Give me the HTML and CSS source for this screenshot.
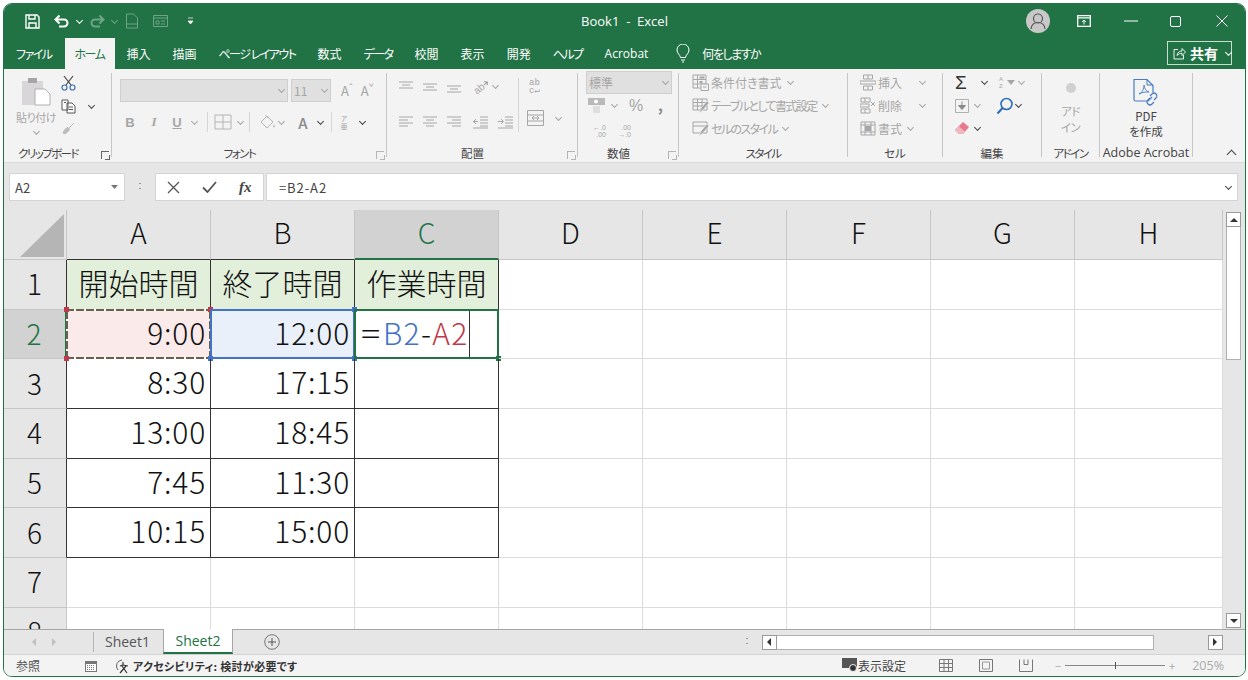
FILE: index.html
```html
<!DOCTYPE html>
<html lang="ja">
<head>
    <meta charset="UTF-8">
    <title>Book1 - Excel</title>
    <link rel="stylesheet" href="styles.css">
</head>
<body>
<svg class="sprite" aria-hidden="true">
    <symbol id="i-left" viewBox="0 0 14 14"><path d="M0 2h14M3 5h8M0 8h14" fill="none" stroke="currentColor"/></symbol>
    <symbol id="i-mid" viewBox="0 0 14 14"><path d="M0 4h14M3 7h8M0 10h14" fill="none" stroke="currentColor"/></symbol>
    <symbol id="i-bot" viewBox="0 0 14 14"><path d="M0 6h14M3 9h8M0 12h14" fill="none" stroke="currentColor"/></symbol>
    <symbol id="i-alignl" viewBox="0 0 14 14"><path d="M0 2h14M0 5h9M0 8h14M0 11h9" fill="none" stroke="currentColor"/></symbol>
    <symbol id="i-alignc" viewBox="0 0 14 14"><path d="M0 2h14M3 5h8M0 8h14M3 11h8" fill="none" stroke="currentColor"/></symbol>
    <symbol id="i-alignr" viewBox="0 0 14 14"><path d="M0 2h14M5 5h9M0 8h14M5 11h9" fill="none" stroke="currentColor"/></symbol>
</svg>

<div class="window">
    <!-- タイトルバー -->
    <header class="titlebar">
        <div class="qat">
            <svg width="15" height="15" viewBox="0 0 15 15"><path d="M1 1h11l2 2v11H1zM4 1v4h6V1M4 14V9h7v5" fill="none" stroke="#fff" stroke-width="1.4"/></svg>
            <svg class="qat-undo" width="16" height="14" viewBox="0 0 16 14"><path d="M2.5 5.5H11a3.500 3.500 0 0 1 0 7H6M6.500 1.500l-4 4 4 4" fill="none" stroke="#fff" stroke-width="2"/></svg>
            <i class="chev white ml8"></i>
            <svg class="ml8 dim" width="16" height="14" viewBox="0 0 16 14"><path d="M13.500 5.500H5a3.500 3.500 0 0 0 0 7h5M9.500 1.500l4 4-4 4" fill="none" stroke="#fff" stroke-width="2"/></svg>
            <i class="chev white dim ml6"></i>
            <svg class="ml8 dim" width="14" height="16" viewBox="0 0 14 16"><path d="M1.500 1h7l4 4v10h-11zM1.500 11h11" fill="none" stroke="#fff"/></svg>
            <svg class="ml14 dim" width="15" height="14" viewBox="0 0 15 14"><path d="M.5 1.500h14v11H.5zM.5 4h14M3 7h3v3H3zM8 7h4M8 10h4" fill="none" stroke="#fff"/></svg>
            <svg class="ml-extra" width="7" height="8" viewBox="0 0 7 8"><path d="M1 1h5M1 4h5l-2.500 3z" fill="#fff" stroke="#fff" stroke-width=".7"/></svg>
        </div>
        <div class="doc-title">Book1&nbsp; - &nbsp;Excel</div>
        <div class="win-btns">
            <span class="avatar">
                <svg width="24" height="24" viewBox="0 0 24 24"><circle cx="12" cy="9.500" r="4.500" fill="none" stroke="#555" stroke-width="1.200"/><path d="M5 20c.5-4.500 3.500-6.500 7-6.500s6.500 2 7 6.500" fill="none" stroke="#555" stroke-width="1.200"/></svg>
            </span>
            <svg class="btn-ribbon" width="14" height="12" viewBox="0 0 14 12"><path d="M.7.700h12.600v10.600H.7zM.7 2.800h12.600" fill="none" stroke="#fff" stroke-width="1.300"/><path d="M7 9.500V5M5 7l2-2 2 2" fill="none" stroke="#fff"/></svg>
            <svg class="btn-min" width="14" height="2" viewBox="0 0 14 2"><path d="M0 1h14" stroke="#fff"/></svg>
            <svg class="btn-max" width="11" height="11" viewBox="0 0 11 11"><rect x=".5" y=".5" width="10" height="10" rx="1.500" fill="none" stroke="#fff"/></svg>
            <svg class="btn-close" width="12" height="12" viewBox="0 0 12 12"><path d="M.5.500l11 11M11.500.500l-11 11" stroke="#fff"/></svg>
        </div>
    </header>

    <!-- タブ -->
    <nav class="tabs">
        <span class="tab kana">ファイル</span>
        <span class="tab kana active">ホーム</span>
        <span class="tab">挿入</span>
        <span class="tab">描画</span>
        <span class="tab kana">ページ レイアウト</span>
        <span class="tab">数式</span>
        <span class="tab kana">データ</span>
        <span class="tab">校閲</span>
        <span class="tab">表示</span>
        <span class="tab">開発</span>
        <span class="tab kana">ヘルプ</span>
        <span class="tab latin">Acrobat</span>
        <span class="tell">
            <svg width="14" height="19" viewBox="0 0 14 19"><path d="M4.500 13.500C4 10.500 1 9.500 1 6a6 6 0 0 1 12 0c0 3.500-3 4.500-3.500 7.500zM5 16h4M6 18h2" fill="none" stroke="#fff"/></svg>
            <span class="kana">何をしますか</span>
        </span>
        <span class="share">
            <svg width="13" height="13" viewBox="0 0 13 13"><path d="M5 2.500H1v9.500h9.500V8M4 8.500c.3-3 2.500-4.500 5-4.500V1.500l3.500 3.500L9 8.500V6.300C7 6.300 5.300 7 4 8.500z" fill="none" stroke="#fff" stroke-width=".9"/></svg>
            <b>共有</b>
            <i class="chev white"></i>
        </span>
    </nav>

    <!-- リボン -->
    <section class="ribbon">
        <div class="group g-clip has-launcher">
            <div class="group-body clip">
                <div class="paste">
                    <svg width="29" height="29" viewBox="0 0 29 29"><path d="M0 4h21v24H0z" fill="#d9d6d9"/><path d="M6 1h9v5H6z" fill="#a8a5a8"/><path d="M13 12h10l5 5v11H13z" fill="#fff" stroke="#b0b0b0"/></svg>
                    <span class="kana-soft">貼り付け</span>
                    <i class="chev"></i>
                </div>
                <div class="clip-tools">
                    <svg width="15" height="16" viewBox="0 0 15 16"><path d="M3 1l7 9M12 1L5 10" fill="none" stroke="#444" stroke-width="1.200"/><circle cx="3.500" cy="12.500" r="2.500" fill="none" stroke="#3f6fb0" stroke-width="1.200"/><circle cx="11.500" cy="12.500" r="2.500" fill="none" stroke="#3f6fb0" stroke-width="1.200"/></svg>
                    <div class="row">
                        <svg width="16" height="15" viewBox="0 0 16 15"><path d="M1 1h6v10H1zM6 4h5l3 3v7H6z" fill="#fff" stroke="#555"/><path d="M8 8h4M8 10.500h4M3 3.500h2" stroke="#555"/></svg>
                        <i class="chev dark ml12"></i>
                    </div>
                    <svg width="14" height="13" viewBox="0 0 14 13"><path d="M13 1L8 6M2 11c1-3 3-5 5-5.500l1.500 1.500C8 9 6 11 3 12z" fill="#bbb" stroke="#bbb"/></svg>
                </div>
            </div>
            <div class="group-label tight">クリップボード</div>
            <i class="launcher dark-launch"></i>
        </div>

        <div class="group g-font has-launcher">
            <div class="group-body font">
                <div class="row font-top">
                    <div class="combo combo-name"><i class="chev"></i></div>
                    <div class="combo combo-size"><span>11</span><i class="chev"></i></div>
                    <span class="grow-a ml10">A<sup>ˆ</sup></span>
                    <span class="grow-a ml8">A<sup>ˇ</sup></span>
                </div>
                <div class="row font-bottom">
                    <b class="fb ml4">B</b>
                    <i class="fi ml12">I</i>
                    <u class="fu ml10">U</u>
                    <i class="chev ml8"></i>
                    <span class="vsep ml10"></span>
                    <svg class="ml6" width="18" height="16" viewBox="0 0 18 16"><path d="M1 1h16v14H1zM9 1v14M1 8h16" fill="none" stroke="#b5b5b5"/></svg>
                    <i class="chev ml6"></i>
                    <span class="vsep ml6"></span>
                    <svg class="ml10" width="16" height="16" viewBox="0 0 16 16"><path d="M1 8l6-6 6 6-6 6zM5 1l3 3" fill="none" stroke="#b5b5b5"/><path d="M14 10c1 2 1 3.500 0 3.500s-1-1.500 0-3.500" fill="#b5b5b5"/></svg>
                    <i class="chev ml3"></i>
                    <span class="fa ml12">A</span>
                    <i class="chev dark ml8"></i>
                    <span class="vsep ml8"></span>
                    <span class="fz ml6">ア<br>亜</span>
                    <i class="chev dark ml10"></i>
                </div>
            </div>
            <div class="group-label kana">フォント</div>
            <i class="launcher"></i>
        </div>

        <div class="group g-align has-launcher">
            <div class="group-body align">
                <div class="align-main">
                    <div class="row align-top">
                        <svg width="14" height="14"><use href="#i-left"/></svg>
                        <svg class="ml10" width="14" height="14"><use href="#i-mid"/></svg>
                        <svg class="ml10" width="14" height="14"><use href="#i-bot"/></svg>
                        <span class="orient ml12">ab<svg width="8" height="8" viewBox="0 0 8 8"><path d="M0 4h7M4 1l3 3-3 3" fill="none" stroke="#777"/></svg></span>
                        <i class="chev ml3"></i>
                    </div>
                    <div class="row align-bottom">
                        <svg width="14" height="14"><use href="#i-alignl"/></svg>
                        <svg class="ml10" width="14" height="14"><use href="#i-alignc"/></svg>
                        <svg class="ml10" width="14" height="14"><use href="#i-alignr"/></svg>
                        <svg class="ml12" width="15" height="14" viewBox="0 0 15 14"><path d="M7 2h8M7 5h8M7 8h8M7 11h8M0 13h15M5 6.500H0M3 4L.5 6.500 3 9" fill="none" stroke="#a6a6a6"/></svg>
                        <svg class="ml10" width="15" height="14" viewBox="0 0 15 14"><path d="M7 2h8M7 5h8M7 8h8M7 11h8M0 13h15M0 6.500h5M3 4l2.500 2.500L3 9" fill="none" stroke="#a6a6a6"/></svg>
                    </div>
                </div>
                <div class="align-side">
                    <span class="wrap-ic">ab<br>c↵</span>
                    <div class="row merge">
                        <svg width="17" height="16" viewBox="0 0 17 16"><path d="M.5.500h16v15H.5zM.5 5h16M.5 11h16M5 8h7M10 6l2 2-2 2M7 6L5 8l2 2" fill="none" stroke="#a6a6a6"/></svg>
                        <i class="chev ml12"></i>
                    </div>
                </div>
            </div>
            <div class="group-label">配置</div>
            <i class="launcher"></i>
        </div>

        <div class="group g-number has-launcher">
            <div class="group-body number">
                <div class="combo combo-format"><span>標準</span><i class="chev"></i></div>
                <div class="row num-mid">
                    <svg width="18" height="17" viewBox="0 0 18 17"><path d="M0 1h17v7H0z" fill="#b9b9b9"/><path d="M5 9h7v7H5z" fill="#dedede"/><circle cx="8" cy="4.500" r="2" fill="#fff"/></svg>
                    <i class="chev ml6"></i>
                    <span class="pct ml12">%</span>
                    <b class="comma ml12">,</b>
                </div>
                <div class="row num-low">
                    <span class="dec">←.0<br>.00</span>
                    <span class="dec ml10">.00<br>→.0</span>
                </div>
            </div>
            <div class="group-label">数値</div>
            <i class="launcher"></i>
        </div>

        <div class="group g-style">
            <div class="group-body lines">
                <div class="row line">
                    <svg width="17" height="17" viewBox="0 0 17 17"><path d="M1 1h13v13H1zM1 5.500h13M1 10h13M5.500 1v13" fill="none" stroke="#a6a6a6"/><path d="M7.500 2.500h5v2h-5zM7.500 7h3v2h-3z" fill="#a6a6a6"/><path d="M9 10h7.500v6.500H9z" fill="#f3f3f3" stroke="#a6a6a6"/><path d="M11 13h3.500" stroke="#a6a6a6"/></svg>
                    <span>条件付き書式</span>
                    <i class="chev ml4"></i>
                </div>
                <div class="row line">
                    <svg width="17" height="17" viewBox="0 0 17 17"><path d="M1 2h14v11H1zM1 5.500h14M1 9h14M5.500 2v11M10 2v11" fill="none" stroke="#a6a6a6"/><path d="M7 16l2-5 6-7 2 2-6 7z" fill="#a6a6a6" stroke="#f3f3f3" stroke-width=".6"/></svg>
                    <span class="tight">テーブルとして書式設定</span>
                    <i class="chev ml4"></i>
                </div>
                <div class="row line">
                    <svg width="17" height="17" viewBox="0 0 17 17"><path d="M1 2h14v11H1zM1 6h14" fill="none" stroke="#a6a6a6"/><path d="M7 16l2-5 6-7 2 2-6 7z" fill="#a6a6a6" stroke="#f3f3f3" stroke-width=".6"/></svg>
                    <span class="tight">セルのスタイル</span>
                    <i class="chev ml4"></i>
                </div>
            </div>
            <div class="group-label tight">スタイル</div>
        </div>

        <div class="group g-cell">
            <div class="group-body lines">
                <div class="row line">
                    <svg width="16" height="17" viewBox="0 0 16 17"><path d="M3.500 1h9v4h-9zM3.500 12h9v4h-9zM8 1v4M8 12v4M0 7h16v3H0z" fill="none" stroke="#a6a6a6"/></svg>
                    <span>挿入</span>
                    <i class="chev ml16"></i>
                </div>
                <div class="row line">
                    <svg width="16" height="17" viewBox="0 0 16 17"><path d="M1 1h9v4H1zM1 12h9v4H1zM5 1v4M5 12v4M0 7h9v3H0zM11 5l4 4M15 5l-4 4" fill="none" stroke="#a6a6a6"/></svg>
                    <span>削除</span>
                    <i class="chev ml16"></i>
                </div>
                <div class="row line">
                    <svg width="16" height="17" viewBox="0 0 16 17"><path d="M1 2h14v13H1zM1 5h14M1 12h14M5 2v13M11 2v13" fill="none" stroke="#a6a6a6"/><path d="M5 6h6v5H5z" fill="#a6a6a6"/></svg>
                    <span>書式</span>
                    <i class="chev ml4"></i>
                </div>
            </div>
            <div class="group-label">セル</div>
        </div>

        <div class="group g-edit">
            <div class="group-body lines edit">
                <div class="row line">
                    <span class="sigma">Σ</span>
                    <i class="chev dark ml14"></i>
                    <span class="sort-az ml12">A<br>Z</span>
                    <svg width="8" height="8" viewBox="0 0 8 8"><path d="M0 1h8L4 6z" fill="#a6a6a6"/></svg>
                    <i class="chev ml4"></i>
                </div>
                <div class="row line">
                    <svg width="14" height="14" viewBox="0 0 14 14"><path d="M.5.500h13v13H.5z" fill="none" stroke="#b0b0b0"/><path d="M7 2.500v7M3.500 6.500L7 10.500l3.500-4z" fill="#8a8a8a" stroke="#8a8a8a"/></svg>
                    <i class="chev ml6"></i>
                    <svg class="ml16" width="18" height="18" viewBox="0 0 18 18"><circle cx="10.500" cy="7" r="5.500" fill="none" stroke="#2b6cb8" stroke-width="1.600"/><path d="M6.500 11L1.500 16.500" stroke="#2b6cb8" stroke-width="2"/></svg>
                    <i class="chev dark ml2"></i>
                </div>
                <div class="row line">
                    <svg width="14" height="13" viewBox="0 0 14 13"><path d="M8 0l6 5-6 7H4L0 8z" fill="#e8788c"/><path d="M0 8l4 4h4l2-2.500L4 4.500z" fill="#f0b7c0"/></svg>
                    <i class="chev dark ml6"></i>
                </div>
            </div>
            <div class="group-label">編集</div>
        </div>

        <div class="group g-addin">
            <div class="group-body big-btn disabled">
                <span class="addin-dot"></span>
                <span class="kana-soft">アド</span>
                <span class="kana-soft">イン</span>
            </div>
            <div class="group-label kana">アドイン</div>
        </div>

        <div class="group g-acro">
            <div class="group-body big-btn">
                <svg class="pdf-ic" width="27" height="28" viewBox="0 0 27 28"><path d="M14 23H2.500a1.500 1.500 0 0 1-1.500-1.500v-20h13l6 6v7" fill="none" stroke="#4a7bc4" stroke-width="1.200"/><path d="M14 1v6h6" fill="none" stroke="#4a7bc4"/><path d="M6 16c3-1 5-5 5-9 .5 4 2 6 5 7-3 0-7 0-10 2z" fill="none" stroke="#4a7bc4" stroke-width=".9"/><path d="M15 23l4-4M17 18l2-2a2.800 2.800 0 0 1 4 4l-2 2M21 24l-2 2a2.800 2.800 0 0 1-4-4l2-2" fill="none" stroke="#4a7bc4" stroke-width="1.200"/></svg>
                <span>PDF</span>
                <span>を作成</span>
            </div>
            <div class="group-label latin">Adobe Acrobat</div>
        </div>

        <i class="chev up dark collapse"></i>
    </section>

    <!-- 数式バー -->
    <section class="formula">
        <div class="namebox"><span>A2</span><svg width="7" height="4" viewBox="0 0 7 4"><path d="M0 0h7L3.500 4z" fill="#777"/></svg></div>
        <span class="grip"></span>
        <div class="fx-btns">
            <svg width="13" height="13" viewBox="0 0 13 13"><path d="M1 1l11 11M12 1L1 12" stroke="#555" stroke-width="1.300"/></svg>
            <svg width="15" height="12" viewBox="0 0 15 12"><path d="M1 6.500L5.500 11 14 1" fill="none" stroke="#555" stroke-width="1.800"/></svg>
            <em>fx</em>
        </div>
        <div class="fx-input"><span>=B2-A2</span><i class="chev dark"></i></div>
    </section>

    <!-- シート -->
    <section class="sheet-area">
        <div class="sheet">
            <div class="corner"><svg width="44" height="43" viewBox="0 0 44 43"><path d="M44 0v43H0z" fill="#b5b5b5"/></svg></div>
            <div class="ch mark">A</div>
            <div class="ch mark">B</div>
            <div class="ch mark on">C</div>
            <div class="ch">D</div>
            <div class="ch">E</div>
            <div class="ch">F</div>
            <div class="ch">G</div>
            <div class="ch">H</div>

            <div class="rh mark">1</div>
            <div class="c box head">開始時間</div>
            <div class="c box head">終了時間</div>
            <div class="c box head">作業時間</div>
            <div class="c"></div><div class="c"></div><div class="c"></div><div class="c"></div><div class="c"></div>

            <div class="rh mark on">2</div>
            <div class="c box num ref-a">9:00
                <span class="ants"></span>
                <i class="h red tl"></i><i class="h red tr"></i><i class="h red bl"></i><i class="h red br"></i>
            </div>
            <div class="c box num ref-b">12:00
                <span class="blue-box"></span>
                <i class="h blue tr"></i><i class="h blue bl"></i><i class="h blue br"></i>
            </div>
            <div class="c box editing">
                <span class="entry"><span class="eq">=</span><span class="t-blue">B2</span>-<span class="t-red">A2</span></span>
                <span class="active-box"></span>
                <i class="h green br"></i>
            </div>
            <div class="c"></div><div class="c"></div><div class="c"></div><div class="c"></div><div class="c"></div>

            <div class="rh mark">3</div>
            <div class="c box num">8:30</div>
            <div class="c box num">17:15</div>
            <div class="c box"></div>
            <div class="c"></div><div class="c"></div><div class="c"></div><div class="c"></div><div class="c"></div>

            <div class="rh mark">4</div>
            <div class="c box num">13:00</div>
            <div class="c box num">18:45</div>
            <div class="c box"></div>
            <div class="c"></div><div class="c"></div><div class="c"></div><div class="c"></div><div class="c"></div>

            <div class="rh mark">5</div>
            <div class="c box num">7:45</div>
            <div class="c box num">11:30</div>
            <div class="c box"></div>
            <div class="c"></div><div class="c"></div><div class="c"></div><div class="c"></div><div class="c"></div>

            <div class="rh mark">6</div>
            <div class="c box num">10:15</div>
            <div class="c box num">15:00</div>
            <div class="c box"></div>
            <div class="c"></div><div class="c"></div><div class="c"></div><div class="c"></div><div class="c"></div>

            <div class="rh">7</div>
            <div class="c"></div><div class="c"></div><div class="c"></div><div class="c"></div><div class="c"></div><div class="c"></div><div class="c"></div><div class="c"></div>

            <div class="rh">8</div>
            <div class="c"></div><div class="c"></div><div class="c"></div><div class="c"></div><div class="c"></div><div class="c"></div><div class="c"></div><div class="c"></div>
        </div>
        <div class="vscroll">
            <div class="sb-btn"><i class="tri t-up"></i></div>
            <div class="v-thumb"></div>
            <div class="sb-btn v-down"><i class="tri t-down"></i></div>
        </div>
    </section>

    <!-- シートタブ -->
    <section class="sheetbar">
        <i class="nav-tri l"></i>
        <i class="nav-tri r"></i>
        <span class="tabs-sep"></span>
        <span class="sheet-tab">Sheet1</span>
        <span class="sheet-tab current">Sheet2</span>
        <svg class="add-sheet" width="16" height="16" viewBox="0 0 16 16"><circle cx="8" cy="8" r="7.300" fill="none" stroke="#777"/><path d="M8 4v8M4 8h8" stroke="#555"/></svg>
        <span class="grip bar-grip"></span>
        <div class="hscroll">
            <div class="sb-btn"><i class="tri t-left"></i></div>
            <div class="h-thumb"></div>
            <div class="sb-btn h-right"><i class="tri t-right"></i></div>
        </div>
    </section>

    <!-- ステータスバー -->
    <footer class="status">
        <span class="st-mode">参照</span>
        <svg class="st-cal" width="12" height="13" viewBox="0 0 12 13"><path d="M0 2h12v11H0z" fill="#777"/><path d="M1 5h10v7H1z" fill="#fff"/><path d="M2 6.500h8M2 8.500h8M2 10.500h8" stroke="#777" stroke-dasharray="1 1"/></svg>
        <svg class="st-acc" width="16" height="16" viewBox="0 0 16 16"><path d="M7 2a6 6 0 0 0-4 10" fill="none" stroke="#666"/><path d="M8 4v3l-3 1M7 8l5 7M11 8l-6 7M8 7l5 1" fill="none" stroke="#333" stroke-width="1.200"/></svg>
        <b class="st-text">アクセシビリティ: 検討が必要です</b>
        <span class="st-display">
            <svg width="16" height="15" viewBox="0 0 16 15"><path d="M0 0h15v10H0z" fill="#555"/><circle cx="11" cy="10" r="3.500" fill="#333" stroke="#f3f3f3"/></svg>
            <span>表示設定</span>
        </span>
        <svg class="st-view" width="14" height="13" viewBox="0 0 14 13"><path d="M.5.500h13v12H.5zM.5 4.500h13M.5 8.500h13M5 .5v12M9.500.5v12" fill="none" stroke="#777"/></svg>
        <svg class="st-view v2" width="14" height="13" viewBox="0 0 14 13"><path d="M.5.500h13v12H.5z" fill="none" stroke="#777"/><path d="M3.500 3h7v7h-7z" fill="none" stroke="#999"/></svg>
        <svg class="st-view v2" width="14" height="13" viewBox="0 0 14 13"><path d="M.5.500v12h13V.5M5 .5v5h4v-5" fill="none" stroke="#777"/></svg>
        <span class="zoom">
            <i>−</i>
            <span class="slider"><span class="knob"></span></span>
            <i>+</i>
            <span class="zoom-val">205%</span>
        </span>
    </footer>
</div>
</body>
</html>
```
FILE: styles.css
```css
html, body{
    margin: 0;
    padding: 0;
    width: 100%;
    height: 100%;
    background-color: #fff;
}
body{
    font-family: "Noto Sans CJK JP", "Noto Sans", sans-serif;
    font-feature-settings: "palt";
    color: #444;
    overflow: hidden;
}
.sprite{
    display: none;
}
i{
    font-style: normal;
}
.window{
    display: flex;
    flex-direction: column;
    box-sizing: border-box;
    width: 1243px;
    height: 674px;
    margin: 3px 0 0 3px;
    border: 1px solid #217346;
    border-radius: 9px;
    overflow: hidden;
}
.row{
    display: flex;
    align-items: center;
}
.kana{
    letter-spacing: -1.5px;
}
.kana-soft{
    letter-spacing: -.5px;
}
.tight{
    letter-spacing: -1.6px;
}
.latin{
    font-family: "Open Sans", sans-serif;
}

/* 余白 */
.ml2{ margin-left: 2px; }
.ml3{ margin-left: 3px; }
.ml4{ margin-left: 4px; }
.ml6{ margin-left: 6px; }
.ml8{ margin-left: 8px; }
.ml10{ margin-left: 10px; }
.ml12{ margin-left: 12px; }
.ml14{ margin-left: 14px; }
.ml16{ margin-left: 16px; }
.ml-extra{ margin-left: 19px; }

/* シェブロン */
.chev{
    display: inline-block;
    flex: none;
    box-sizing: border-box;
    width: 5px;
    height: 5px;
    margin-bottom: 2px;
    border-right: 1px solid #a6a6a6;
    border-bottom: 1px solid #a6a6a6;
    transform: rotate(45deg);
}
.chev.dark{
    border-color: #444;
    border-width: 1.5px;
}
.chev.white{
    border-color: #fff;
}
.chev.up{
    transform: rotate(225deg);
    width: 7px;
    height: 7px;
    border-width: 1px;
}
.dim{
    opacity: .35;
}

/* タイトルバー */
.titlebar{
    display: grid;
    grid-template-columns: 1fr auto 1fr;
    align-items: center;
    flex: none;
    height: 34px;
    background-color: #217346;
    color: #fff;
}
.qat{
    display: flex;
    align-items: center;
    padding-left: 21px;
}
.qat-undo{
    margin-left: 13px;
}
.doc-title{
    font-family: "Open Sans", sans-serif;
    font-size: 13px;
}
.win-btns{
    display: flex;
    align-items: center;
    justify-content: flex-end;
}
.avatar{
    display: flex;
    width: 24px;
    height: 24px;
    border-radius: 50%;
    background-color: #c8c8c8;
    margin-right: 27px;
}
.btn-ribbon{ margin-right: 33px; }
.btn-min{ margin-right: 32px; }
.btn-max{ margin-right: 35px; }
.btn-close{ margin-right: 17px; }

/* タブ */
.tabs{
    display: flex;
    align-items: stretch;
    flex: none;
    height: 31px;
    padding-left: 1px;
    background-color: #217346;
    color: #fff;
    font-size: 12px;
    line-height: 31px;
}
.tab{
    padding: 0 11px;
    white-space: pre;
}
.tab.active{
    margin-left: 2px;
    padding: 0 11px 0 10px;
    background-color: #f3f3f3;
    color: #217346;
}
.tell{
    display: flex;
    align-items: center;
    gap: 12px;
    margin-left: 17px;
}
.share{
    display: flex;
    align-items: center;
    gap: 4px;
    box-sizing: border-box;
    width: 65px;
    height: 24px;
    margin: 3px 13px 0 auto;
    padding-left: 5px;
    border: 1px solid #c9ddd1;
    font-size: 14px;
}
.share .chev{
    margin-left: 4px;
}

/* リボン */
.ribbon{
    display: flex;
    flex: none;
    height: 93px;
    background-color: #f3f3f3;
}
.group{
    position: relative;
    flex: none;
    box-sizing: border-box;
    height: 84px;
    margin-top: 4px;
    border-right: 1px solid #c6c6c6;
}
.group-body{
    box-sizing: border-box;
    height: 72px;
}
.group-label{
    height: 16px;
    font-size: 11.5px;
    line-height: 16px;
    text-align: center;
    white-space: nowrap;
    color: #444;
}
.has-launcher .group-label{
    padding-right: 19px;
}
.launcher{
    position: absolute;
    right: 2px;
    bottom: -2px;
    box-sizing: border-box;
    width: 8px;
    height: 8px;
    border-left: 1px solid #b5b5b5;
    border-top: 1px solid #b5b5b5;
}
.launcher::after{
    content: "";
    position: absolute;
    right: -1px;
    bottom: -1px;
    width: 4px;
    height: 4px;
    border-right: 1px solid #b5b5b5;
    border-bottom: 1px solid #b5b5b5;
}
.dark-launch, .dark-launch::after{
    border-color: #666;
}
.g-clip{ width: 108px; }
.g-font{ width: 275px; }
.g-align{ width: 191px; }
.g-number{ width: 101px; }
.g-style{ width: 169px; }
.g-cell{ width: 95px; }
.g-edit{ width: 99px; }
.g-addin{ width: 58px; }
.g-acro{ width: 93px; }
.g-addin .group-label{ margin: 0 -4px; }
.g-acro .group-label{ margin: 0 -2px; font-size: 12.5px; }
.collapse{
    align-self: flex-end;
    margin: 0 0 4px 35px;
}

/* クリップボード */
.clip{
    display: flex;
    padding-left: 10px;
}
.paste{
    display: flex;
    flex-direction: column;
    align-items: center;
    width: 44px;
    padding-top: 4px;
    font-size: 11px;
    line-height: 14px;
    color: #a6a6a6;
}
.paste svg{
    margin-bottom: 4px;
}
.paste .chev{
    margin-top: 5px;
}
.clip-tools{
    display: flex;
    flex-direction: column;
    gap: 8px;
    margin-left: 3px;
    padding-top: 2px;
}

/* フォント */
.font{
    padding: 6px 0 0 8px;
    color: #a6a6a6;
}
.font-top{
    height: 23px;
}
.font-bottom{
    height: 20px;
    margin-top: 10px;
    font-size: 13px;
}
.combo{
    display: flex;
    align-items: center;
    justify-content: space-between;
    box-sizing: border-box;
    height: 23px;
    padding: 0 3px 0 2px;
    background-color: #e0e0e0;
    border: 1px solid #cfcfcf;
    font-size: 12px;
}
.combo-name{
    justify-content: flex-end;
    width: 168px;
}
.combo-size{
    width: 40px;
    margin-left: 3px;
}
.grow-a{
    font-size: 13px;
}
.grow-a sup{
    font-size: 9px;
    line-height: 0;
}
.fb, .fi, .fu{
    display: inline-block;
    width: 12px;
    text-align: center;
    font-family: "Liberation Serif", serif;
}
.fb{
    font-family: "Liberation Sans", sans-serif;
}
.fi{
    font-style: italic;
    font-weight: bold;
}
.fu{
    width: 14px;
    font-family: "Liberation Sans", sans-serif;
    font-weight: bold;
}
.vsep{
    width: 1px;
    height: 20px;
    background-color: #d5d5d5;
}
.fa{
    width: 14px;
    font-size: 15px;
    font-weight: 500;
    text-align: center;
    color: #8a8a8a;
}
.fz{
    width: 12px;
    font-size: 7px;
    line-height: 8px;
    text-align: center;
}

/* 配置 */
.align{
    display: flex;
    color: #a6a6a6;
}
.align-main{
    box-sizing: border-box;
    width: 131px;
    padding: 6px 0 0 12px;
}
.align-top{
    height: 15px;
}
.align-bottom{
    height: 15px;
    margin-top: 20px;
}
.orient{
    display: flex;
    align-items: center;
    width: 17px;
    font-family: "Liberation Sans", sans-serif;
    font-size: 10px;
    line-height: 10px;
    white-space: nowrap;
    transform: rotate(-40deg);
}
.align-side{
    display: flex;
    flex-direction: column;
    box-sizing: border-box;
    height: 54px;
    margin-top: 5px;
    padding-left: 8px;
    border-left: 1px solid #d5d5d5;
}
.wrap-ic{
    padding: 1px 0 0 2px;
    font-family: "Liberation Mono", monospace;
    font-size: 9px;
    line-height: 8px;
}
.merge{
    margin-top: 15px;
}

/* 数値 */
.number{
    height: 74px;
    margin-top: -2px;
    padding-left: 8px;
    color: #a6a6a6;
}
.combo-format{
    width: 86px;
}
.num-mid{
    height: 17px;
    margin-top: 3px;
    padding-left: 2px;
}
.pct{
    width: 17px;
    font-family: "Liberation Sans", sans-serif;
    font-size: 16px;
}
.comma{
    font-size: 15px;
    color: #888;
    margin-top: -2px;
}
.num-low{
    height: 16px;
    margin-top: 9px;
    padding-left: 5px;
}
.dec{
    width: 15px;
    font-family: "Liberation Sans", sans-serif;
    font-size: 7px;
    line-height: 7px;
    text-align: right;
}

/* スタイル・セル・編集の3行 */
.lines{
    height: 74px;
    margin-top: -2px;
    padding-left: 13px;
    color: #a6a6a6;
}
.g-cell .lines{
    padding-left: 12px;
}
.line{
    height: 23px;
    font-size: 12px;
    gap: 2px;
    white-space: nowrap;
}
.edit{
    padding-left: 12px;
}
.edit .line{
    gap: 0;
}
.sigma{
    width: 13px;
    font-family: "Liberation Sans", sans-serif;
    font-size: 19px;
    color: #333;
}
.sort-az{
    width: 6px;
    margin-right: 2px;
    font-family: "Liberation Sans", sans-serif;
    font-size: 6px;
    line-height: 7px;
}

/* 大きいボタン */
.big-btn{
    display: flex;
    flex-direction: column;
    align-items: center;
    font-size: 11.5px;
    line-height: 15px;
    color: #444;
}
.big-btn.disabled{
    color: #a6a6a6;
}
.addin-dot{
    width: 10px;
    height: 10px;
    margin: 10px 0;
    border-radius: 50%;
    background-color: #d0d0d0;
}
.big-btn.disabled span + span{
    margin-top: 1px;
}
.pdf-ic{
    margin: 5px 0 3px;
}

/* 数式バー */
.formula{
    display: flex;
    align-items: flex-start;
    flex: none;
    box-sizing: border-box;
    height: 48px;
    padding: 10px 7px 0 5px;
    background-color: #e6e6e6;
    border-top: 1px solid #dcdcdc;
    font-size: 13px;
}
.namebox, .fx-btns, .fx-input{
    display: flex;
    align-items: center;
    box-sizing: border-box;
    height: 28px;
    background-color: #fff;
    border: 1px solid #d4d4d4;
}
.namebox{
    justify-content: space-between;
    width: 116px;
    padding: 0 6px 0 5px;
}
.grip{
    width: 2px;
    height: 12px;
    margin: 8px 14px 0 14px;
    background-image: radial-gradient(circle, #999 1px, transparent 1px);
    background-size: 2px 5px;
}
.fx-btns{
    gap: 22px;
    width: 109px;
    padding-left: 11px;
}
.fx-btns em{
    font-family: "Liberation Serif", serif;
    font-size: 15px;
    font-weight: bold;
}
.fx-input{
    flex: 1;
    justify-content: space-between;
    margin-left: 2px;
    padding: 0 6px 0 12px;
    letter-spacing: .9px;
}

/* シート */
.sheet-area{
    display: flex;
    flex: none;
    height: 419px;
    background-color: #e6e6e6;
}
.sheet{
    display: grid;
    grid-template-columns: 63px repeat(7, 144px) 148px;
    grid-template-rows: 50px repeat(8, 49.67px);
    width: 1219px;
    height: 419px;
    overflow: hidden;
    background-color: #fff;
    font-feature-settings: normal;
    font-size: 30px;
    color: #111;
}
.corner{
    display: flex;
    justify-content: flex-end;
    box-sizing: border-box;
    padding: 4px 2px 0 0;
    background-color: #e6e6e6;
    border-right: 1px solid #c6c6c6;
    border-bottom: 1px solid #c6c6c6;
}
.ch, .rh{
    display: flex;
    align-items: center;
    justify-content: center;
    box-sizing: border-box;
    background-color: #e6e6e6;
    font-size: 28px;
    font-weight: 300;
    padding-bottom: 5px;
    border-right: 1px solid #c6c6c6;
    border-bottom: 1px solid #c6c6c6;
}
.ch.mark{
    border-bottom-color: #333;
}
.rh{
    padding-right: 1px;
    padding-bottom: 2px;
}
.rh.mark{
    border-right-color: #333;
}
.ch.on{
    background-color: #d2d2d2;
    color: #217346;
    border-bottom: 2px solid #217346;
}
.rh.on{
    background-color: #d2d2d2;
    color: #217346;
    border-right: 2px solid #217346;
}
.c{
    position: relative;
    box-sizing: border-box;
    border-right: 1px solid #dcdcdc;
    border-bottom: 1px solid #dcdcdc;
    font-weight: 300;
    line-height: 45px;
    white-space: nowrap;
}
.c.box{
    border-right-color: #333;
    border-bottom-color: #333;
}
.c.head{
    background-color: #e2efda;
    text-align: center;
}
.c.num{
    padding-right: 4px;
    text-align: right;
    letter-spacing: .8px;
}
.ref-a{
    background-color: #fbeaea;
}
.ref-b{
    background-color: #e9f0fa;
}
.ants, .blue-box, .active-box{
    position: absolute;
    top: -1px;
    left: -1px;
    right: -1px;
    bottom: -1px;
}
.ants{
    background:
        repeating-linear-gradient(90deg, #66604f 0 8px, #fff 8px 10px) top / 100% 2px no-repeat,
        repeating-linear-gradient(90deg, #66604f 0 8px, #fff 8px 10px) bottom / 100% 2px no-repeat,
        repeating-linear-gradient(0deg, #66604f 0 8px, #fff 8px 10px) left / 2px 100% no-repeat,
        repeating-linear-gradient(0deg, #66604f 0 8px, #fff 8px 10px) right / 2px 100% no-repeat;
}
.blue-box{
    border: 2px solid #4472c4;
}
.active-box{
    border: 2px solid #217346;
}
.h{
    position: absolute;
    width: 5px;
    height: 5px;
}
.h.red{ background-color: #c0394b; }
.h.blue{ background-color: #4472c4; }
.h.green{ background-color: #217346; }
.tl{ top: -3px; left: -3px; }
.tr{ top: -3px; right: -3px; }
.bl{ bottom: -3px; left: -3px; }
.br{ bottom: -3px; right: -3px; }
.editing{
    padding-left: 5px;
}
.entry{
    display: inline-block;
    height: 100%;
    letter-spacing: 1.3px;
    border-right: 1px solid #333;
}
.eq{
    display: inline-block;
    width: 23px;
    text-align: center;
    transform: scaleX(1.2);
}
.t-blue{ color: #4472c4; }
.t-red{ color: #c0394b; }

/* スクロールバー */
.vscroll{
    display: flex;
    flex-direction: column;
    flex: 1;
    box-sizing: border-box;
    padding: 2px 4px 1px 3px;
}
.sb-btn{
    display: flex;
    align-items: center;
    justify-content: center;
    flex: none;
    box-sizing: border-box;
    width: 15px;
    height: 15px;
    background-color: #fff;
    border: 1px solid #9a9a9a;
}
.v-thumb{
    box-sizing: border-box;
    width: 15px;
    height: 133px;
    background-color: #fff;
    border: 1px solid #b0b0b0;
    border-top: none;
}
.v-down{
    margin-top: auto;
}
.tri{
    width: 0;
    height: 0;
    border: 4px solid transparent;
}
.t-up{ border-bottom-color: #333; border-top-width: 0; }
.t-down{ border-top-color: #333; border-bottom-width: 0; }
.t-left{ border-right-color: #333; border-left-width: 0; }
.t-right{ border-left-color: #333; border-right-width: 0; }

/* シートタブ */
.sheetbar{
    display: flex;
    align-items: center;
    flex: none;
    box-sizing: border-box;
    height: 26px;
    background-color: #e6e6e6;
    border-top: 1px solid #a6a6a6;
    border-bottom: 1px solid #d4d4d4;
    font-size: 14px;
    font-family: "Open Sans", sans-serif;
}
.nav-tri{
    width: 0;
    height: 0;
    border: 4px solid transparent;
}
.nav-tri.l{
    margin-left: 24px;
    border-right-color: #c0c0c0;
}
.nav-tri.r{
    margin-left: 16px;
    border-left-color: #c0c0c0;
}
.tabs-sep{
    width: 1px;
    height: 20px;
    margin-left: 33px;
    background-color: #b5b5b5;
}
.sheet-tab{
    box-sizing: border-box;
    height: 24px;
    line-height: 24px;
    padding: 0 13px 0 11px;
    color: #555;
}
.sheet-tab.current{
    width: 70px;
    height: 25px;
    margin-top: -1px;
    padding: 0;
    text-align: center;
    background-color: #fff;
    color: #217346;
    border-bottom: 2px solid #217346;
    border-left: 1px solid #a6a6a6;
    border-right: 1px solid #a6a6a6;
}
.add-sheet{
    margin-left: 31px;
}
.bar-grip{
    margin: 0 0 0 466px;
}
.hscroll{
    display: flex;
    width: 461px;
    margin-left: 14px;
}
.h-thumb{
    box-sizing: border-box;
    width: 377px;
    height: 15px;
    background-color: #fff;
    border: 1px solid #b0b0b0;
    border-left: none;
}
.h-right{
    margin-left: auto;
}

/* ステータスバー */
.status{
    display: flex;
    align-items: center;
    flex: 1;
    font-size: 11px;
    background-color: #f3f3f3;
}
.st-mode{
    margin-left: 12px;
    font-size: 12px;
    color: #555;
}
.st-cal{
    margin-left: 45px;
}
.st-acc{
    margin-left: 18px;
}
.st-text{
    margin-left: 2px;
    font-size: 11px;
    letter-spacing: .3px;
    color: #333;
}
.st-display{
    display: flex;
    align-items: center;
    margin-left: auto;
    font-size: 12px;
}
.st-view{
    margin-left: 33px;
}
.st-view.v2{
    margin-left: 26px;
}
.zoom{
    display: flex;
    align-items: center;
    gap: 4px;
    margin: 0 21px 0 22px;
    color: #aaa;
}
.slider{
    position: relative;
    width: 100px;
    height: 1px;
    background-color: #888;
}
.knob{
    position: absolute;
    top: -3px;
    left: 50px;
    width: 1px;
    height: 7px;
    background-color: #555;
}
.zoom-val{
    margin-left: 13px;
    font-family: "Open Sans", sans-serif;
    font-size: 12.5px;
}
```
